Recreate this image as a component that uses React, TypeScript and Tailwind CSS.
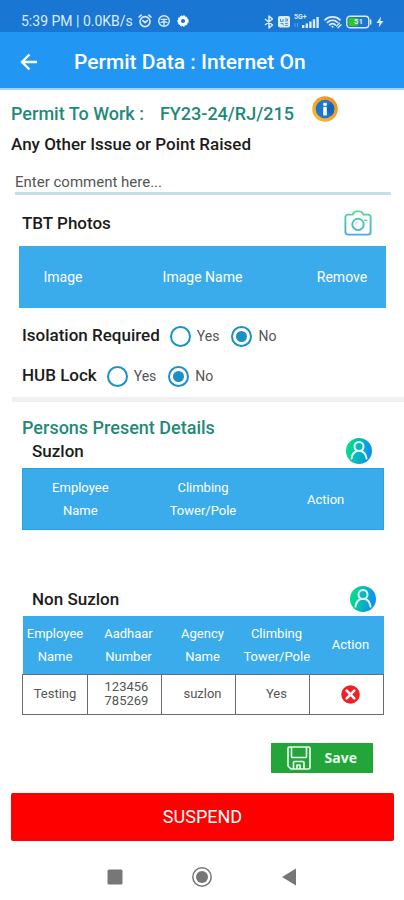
import { useState } from "react";
import type { ReactNode } from "react";

type NonSuzlonPerson = {
  name: string;
  aadhaar: string;
  agency: string;
  climbing: string;
};

const initialPersons: NonSuzlonPerson[] = [
  { name: "Testing", aadhaar: "123456 785269", agency: "suzlon", climbing: "Yes" },
];

const StatusBar = () => (
  <div className="flex h-8 items-end justify-between bg-[#1976d2] pr-5 pb-[3px] pl-[21px] text-[#dcecfb]">
    <div className="flex items-center gap-[5px]">
      <span className="text-sm leading-4 whitespace-nowrap">5:39 PM | 0.0KB/s</span>
      <svg className="size-3.5" viewBox="0 0 14 14" fill="none" stroke="currentColor" strokeWidth="1.6" strokeLinecap="round">
        <circle cx="7" cy="7.6" r="5" />
        <path d="M1 3 3.2 1.2M13 3l-2.2-1.8M4.8 6.6 7 8.6l2.4-2" />
      </svg>
      <svg className="size-3.5" viewBox="0 0 14 14" fill="none" stroke="currentColor" strokeWidth="1.4">
        <circle cx="7" cy="7" r="5.3" />
        <path d="M3.6 5.4h6.800M7 5.400v6.600M3.500 8.600 7 7.400l3.500 1.200" />
      </svg>
      <svg className="size-3.5" viewBox="0 0 14 14" fill="none" stroke="#fff">
        <circle cx="7" cy="7" r="3.6" strokeWidth="3" />
        <circle cx="7" cy="7" r="5.2" strokeWidth="1" strokeDasharray="2 1" />
      </svg>
    </div>
    <div className="flex items-center gap-1">
      <svg className="h-3.5 w-2.5" viewBox="0 0 10 14" fill="none" stroke="currentColor" strokeWidth="1.5" strokeLinejoin="round">
        <path d="M1 4l7.5 6L5 13V1l3.5 3L1 10" />
      </svg>
      <svg className="h-3.5 w-3" viewBox="0 0 12 14">
        <rect y="1" width="12" height="11.5" rx="2" fill="currentColor" />
        <path d="M2.5 4v2.4h2.6V4M7 4h2.4v2H7M2.5 8.6h2.6v1.8M7 8.4h2.8M7 10.4h2.8" fill="none" stroke="#1976d2" strokeWidth=".8" />
      </svg>
      <span className="relative block h-3.5 w-[26px]">
        <span className="absolute -top-0.5 left-0 text-[7px] leading-[8px] font-bold">5G+</span>
        <svg className="h-3.5 w-[26px]" viewBox="0 0 26 14" fill="currentColor">
          <path d="M8 10h2.4v3H8zM11.6 8.4H14V13h-2.4zM15.2 6.4h2.4V13h-2.4zM18.8 4.2h2.4V13h-2.4zM22.4 2h2.4v11h-2.4z" />
          <path d="M1 8v4M3.5 8v4" stroke="currentColor" strokeWidth=".7" opacity=".5" />
        </svg>
      </span>
      <svg className="h-3.5 w-[18px]" viewBox="0 0 18 14" fill="none" stroke="currentColor" strokeWidth="1.8" strokeLinecap="round">
        <path d="M1 4.800c4-4 11-4 15 0M3.500 7.400c3-2.700 7-2.700 10 0M5.800 9.800c1.600-1.400 3.800-1.400 5.400 0" />
        <circle cx="8.500" cy="11.800" r="1" fill="currentColor" stroke="none" />
        <path d="m12.600 11 2.800-2.800M14 12.800l3-3" strokeWidth="1.3" />
      </svg>
      <span className="relative block h-3.5 w-[26px]">
        <svg className="h-3.5 w-[26px]" viewBox="0 0 26 14" fill="none">
          <rect x=".8" y="1.3" width="22" height="11.4" rx="3.2" stroke="currentColor" strokeWidth="1.4" />
          <rect x="2.6" y="3" width="9.5" height="8" rx="1.4" fill="#34c724" />
          <path d="M24.7 5v4" stroke="currentColor" strokeWidth="1.4" strokeLinecap="round" />
        </svg>
        <span className="absolute top-0 left-2 text-[8px] leading-[14px] font-bold">51</span>
      </span>
      <svg className="h-3.5 w-2" viewBox="0 0 8 14" fill="currentColor">
        <path d="M5 1.5.5 8h3L2.6 12.5 7.5 6H4.4z" />
      </svg>
    </div>
  </div>
);

const InfoIcon = () => (
  <svg className="size-[26px]" viewBox="0 0 26 26">
    <defs>
      <linearGradient id="infoRing" x1="0" y1="1" x2="1" y2="0">
        <stop offset="0" stopColor="#fbc02d" />
        <stop offset="1" stopColor="#f08a24" />
      </linearGradient>
    </defs>
    <circle cx="13" cy="13" r="12.8" fill="url(#infoRing)" />
    <circle cx="13" cy="13" r="9.3" fill="#1c78cf" />
    <path d="M19.6 6.4a9.3 9.3 0 0 1 0 13.2L13 13z" fill="#1466b8" />
    <rect x="11.2" y="6.8" width="3.6" height="3" rx=".8" fill="#fff" />
    <rect x="11.2" y="10.8" width="3.6" height="8.6" rx=".6" fill="#fff" />
  </svg>
);

const CameraIcon = () => (
  <svg className="h-[26px] w-7" viewBox="0 0 28 26" fill="none" stroke="url(#camera)" strokeLinejoin="round" strokeLinecap="round">
    <defs>
      <linearGradient id="camera" gradientUnits="userSpaceOnUse" x1="14" y1="0" x2="14" y2="26">
        <stop offset="0" stopColor="#4fe08f" />
        <stop offset="1" stopColor="#4aa5ea" />
      </linearGradient>
    </defs>
    <path
      d="M8.500 4.600 9.700 2.800Q10.600 1.400 12.200 1.400h3.600q1.600 0 2.500 1.400L19.500 4.600H24q2.600 0 2.600 2.600V22q0 2.600-2.600 2.600H4Q1.400 24.600 1.400 22V7.200Q1.400 4.600 4 4.600z"
      strokeWidth="1.9"
    />
    <circle cx="14" cy="14.400" r="5.700" strokeWidth="1.900" />
    <path d="M20.800 10.200h1.600" strokeWidth="1.600" />
    <path d="M11.300 14.400a2.700 2.700 0 0 1 2.700-2.700" strokeWidth="1" opacity=".5" />
  </svg>
);

const PersonIcon = () => (
  <svg className="size-[26px]" viewBox="0 0 26 26" fill="none">
    <defs>
      <linearGradient id="person" x1="0" y1="0.4" x2="1" y2="0.6">
        <stop offset="0.1" stopColor="#05d98c" />
        <stop offset="0.9" stopColor="#0a93f0" />
      </linearGradient>
    </defs>
    <circle cx="13" cy="13" r="13" fill="url(#person)" />
    <circle cx="13" cy="8.500" r="4.500" stroke="#e4fbfa" strokeWidth="2" />
    <path d="M5.500 20.500c.5-4 2.500-6.800 5.800-7.800M20.500 20.500c-.5-4-2.500-6.800-5.800-7.800" stroke="#e4fbfa" strokeWidth="2" strokeLinecap="round" />
  </svg>
);

const DeleteIcon = () => (
  <svg className="size-[19px]" viewBox="0 0 19 19">
    <circle cx="9.500" cy="9.500" r="9.300" fill="#f02028" />
    <path d="m5.700 5.700 7.600 7.600m0-7.600-7.600 7.600" stroke="#fff" strokeWidth="2.600" strokeLinecap="round" />
  </svg>
);

const SaveIcon = () => (
  <svg className="size-6" viewBox="0 0 24 24" fill="none" stroke="#e9f9ec" strokeWidth="1.7" strokeLinejoin="round">
    <path d="M2.500 1h19q1.500 0 1.500 1.500v19q0 1.500-1.500 1.500H4l-3-3V2.500Q1 1 2.500 1z" />
    <path d="M4.500 1v9.500q0 1 1 1h13q1 0 1-1V1" />
    <path d="M6.500 23v-6.500q0-1 1-1h8.500q1 0 1 1V23M10 23v-4h3v4" />
  </svg>
);

const RadioGroup = ({ label, name }: { label: string; name: string }) => {
  const [value, setValue] = useState("No");

  return (
    <fieldset className="flex h-10 items-center gap-3">
      <legend className="float-left -mr-0.5 text-[17px] font-medium text-[#1c1c1c]">{label}</legend>
      {["Yes", "No"].map((option) => (
        <label key={option} className="flex items-center gap-1.5 text-sm text-[#555]">
          <input
            type="radio"
            name={name}
            value={option}
            checked={value === option}
            onChange={() => setValue(option)}
            className="grid size-[21px] appearance-none place-items-center rounded-full border-2 border-[#1c8fc7] before:size-[11px] before:rounded-full checked:before:bg-[#1c8fc7]"
          />
          {option}
        </label>
      ))}
    </fieldset>
  );
};

const PersonsHeader = ({ title, children }: { title: string; children?: ReactNode }) => (
  <div className="flex items-center justify-between pl-2.5">
    <h3 className="text-[17px] leading-6 font-medium text-[#1c1c1c]">{title}</h3>
    {children}
  </div>
);

const App = () => {
  const [persons, setPersons] = useState(initialPersons);
  const [comment, setComment] = useState("");

  const removePerson = (index: number) => {
    setPersons((prev) => prev.filter((_, i) => i !== index));
  };

  return (
    <div className="min-h-screen bg-white font-['Roboto',sans-serif]">
      <StatusBar />
      <header className="flex h-[58px] items-center gap-9 border-b-2 border-[#a9d0fa] bg-[#2196f3] pt-1 pl-5 text-white">
        <button type="button" aria-label="Back">
          <svg className="size-[18px]" viewBox="0 0 18 18" fill="none" stroke="currentColor" strokeWidth="2.4">
            <path d="M17 9H2.500M9.500 1.500 2 9l7.500 7.500" />
          </svg>
        </button>
        <h1 className="text-[21px] leading-7 font-medium">Permit Data : Internet On</h1>
      </header>

      <main>
        <section className="px-[11px] pt-1.5">
          <div className="flex items-start gap-[18px]">
            <h2 className="flex gap-4 pt-1 text-lg font-medium text-[#1f8a78]">
              <span>Permit To Work :</span>
              <span>FY23-24/RJ/215</span>
            </h2>
            <button type="button" aria-label="Permit info">
              <InfoIcon />
            </button>
          </div>
          <label htmlFor="comment" className="mt-1 block text-[17px] leading-6 font-medium text-[#1c1c1c]">
            Any Other Issue or Point Raised
          </label>
          <input
            id="comment"
            type="text"
            className="mx-1 mt-4 block w-[calc(100%-6px)] border-b-3 border-[#c5dfe6] text-[15px] leading-5 outline-none placeholder:text-[#555]"
            placeholder="Enter comment here..."
            value={comment}
            onChange={(e) => setComment(e.target.value)}
          />
        </section>

        <section className="pt-[15px] pr-[18px] pl-[19px]">
          <div className="mb-2.5 flex items-center justify-between pr-3.5 pl-[3px]">
            <h2 className="text-[17px] leading-6 font-medium text-[#1c1c1c]">TBT Photos</h2>
            <button type="button" aria-label="Add photo">
              <CameraIcon />
            </button>
          </div>
          <table className="w-full table-fixed bg-[#3aabeb] text-sm text-white">
            <thead>
              <tr className="h-[62px]">
                <th className="w-[24%] font-normal">Image</th>
                <th className="font-normal">Image Name</th>
                <th className="w-[24%] font-normal">Remove</th>
              </tr>
            </thead>
          </table>
        </section>

        <section className="px-[22px] pt-2">
          <RadioGroup label="Isolation Required" name="isolation" />
          <RadioGroup label="HUB Lock" name="hubLock" />
        </section>

        <hr className="mt-px ml-3 border-t-5 border-[#f0f0f0]" />

        <section className="pt-4 pr-5 pl-[22px]">
          <h2 className="text-lg leading-5 font-medium text-[#1f8a78]">Persons Present Details</h2>
          <PersonsHeader title="Suzlon">
            <button type="button" aria-label="Add Suzlon person" className="mr-3">
              <PersonIcon />
            </button>
          </PersonsHeader>
          <table className="mt-1 w-full table-fixed bg-[#3aabeb] text-[13px] leading-[23px] text-white outline-1 -outline-offset-1 outline-[#28a0e6]">
            <thead>
              <tr className="h-[62px]">
                <th className="pr-1 font-normal">
                  Employee
                  <br />
                  Name
                </th>
                <th className="font-normal">
                  Climbing
                  <br />
                  Tower/Pole
                </th>
                <th className="pl-1 font-normal">Action</th>
              </tr>
            </thead>
          </table>
        </section>

        <section className="pt-14 pr-5 pl-[22px]">
          <PersonsHeader title="Non Suzlon">
            <button type="button" aria-label="Add non Suzlon person" className="mr-2">
              <PersonIcon />
            </button>
          </PersonsHeader>
          <table className="mt-1 w-full table-fixed border-collapse text-[13px] text-white">
            <thead className="bg-[#3aabeb] leading-[23px]">
              <tr className="h-[58px]">
                <th className="w-[18%] font-normal">
                  Employee
                  <br />
                  Name
                </th>
                <th className="pl-2 font-normal">
                  Aadhaar
                  <br />
                  Number
                </th>
                <th className="pl-2 font-normal">
                  Agency
                  <br />
                  Name
                </th>
                <th className="pl-2 font-normal">
                  Climbing
                  <br />
                  Tower/Pole
                </th>
                <th className="pl-2 font-normal">Action</th>
              </tr>
            </thead>
            <tbody className="text-center leading-[14px] text-[#555]">
              {persons.map((person, index) => (
                <tr key={person.aadhaar} className="h-10">
                  <td className="border border-[#6b6b6b]">{person.name}</td>
                  <td className="border border-[#6b6b6b] pr-2 pl-3">{person.aadhaar}</td>
                  <td className="border border-[#6b6b6b] pl-2">{person.agency}</td>
                  <td className="border border-[#6b6b6b] pl-2">{person.climbing}</td>
                  <td className="border border-[#6b6b6b] pl-2">
                    <button
                      type="button"
                      aria-label="Remove person"
                      className="flex w-full justify-center"
                      onClick={() => removePerson(index)}
                    >
                      <DeleteIcon />
                    </button>
                  </td>
                </tr>
              ))}
            </tbody>
          </table>
        </section>

        <div className="mt-7 flex justify-end pr-[31px]">
          <button
            type="button"
            className="flex h-[30px] items-center gap-3.5 bg-[#22a63a] px-4 font-['Open_Sans',sans-serif] text-sm font-bold text-[#e9f9ec]"
          >
            <SaveIcon />
            Save
          </button>
        </div>

        <div className="mt-5 pr-2.5 pl-[11px]">
          <button type="button" className="h-12 w-full rounded-xs bg-[#fe0000] text-lg text-white">
            SUSPEND
          </button>
        </div>
      </main>

      <nav className="flex h-[58px] items-end justify-center gap-[69px] pb-3 text-[#777]">
        <button type="button" aria-label="Recent apps" className="flex h-5 items-center">
          <svg className="size-4" viewBox="0 0 16 16">
            <rect x=".5" y=".5" width="15" height="15" rx="1.5" fill="currentColor" />
          </svg>
        </button>
        <button type="button" aria-label="Home" className="flex h-5 items-center">
          <svg className="size-5" viewBox="0 0 20 20" fill="none" stroke="currentColor">
            <circle cx="10" cy="10" r="9.2" strokeWidth="1.5" />
            <circle cx="10" cy="10" r="6" fill="currentColor" stroke="none" />
          </svg>
        </button>
        <button type="button" aria-label="Back to previous app" className="flex h-5 items-center">
          <svg className="h-[18px] w-4" viewBox="0 0 16 18" fill="currentColor">
            <path d="M15 .5v17L1 9z" />
          </svg>
        </button>
      </nav>
    </div>
  );
};

export default App;
